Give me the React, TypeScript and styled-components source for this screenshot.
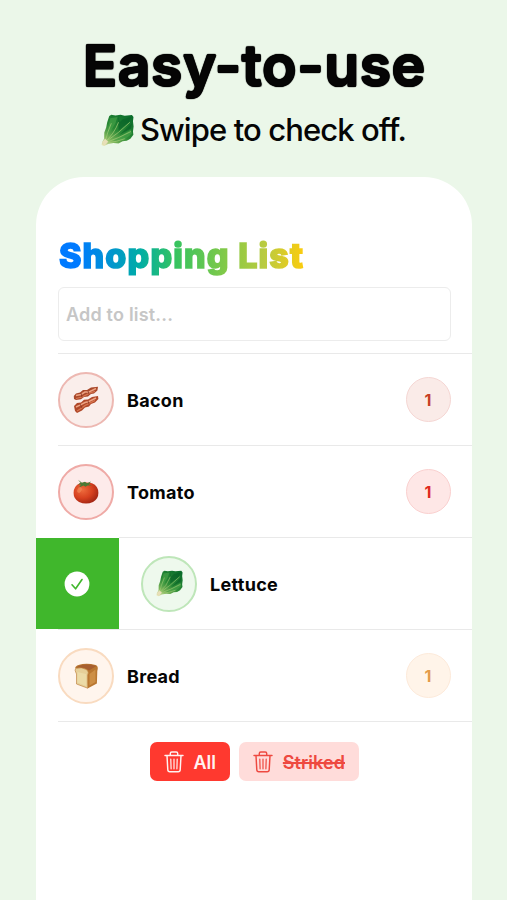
import React from 'react';
import styled, { createGlobalStyle } from 'styled-components';

const Global = createGlobalStyle`
  * { box-sizing: border-box; }
  body { margin: 0; background: #ebf7e9; font-family: Inter, "Liberation Sans", sans-serif; color: #050505; }
`;

const Page = styled.main`
  width: 507px;
  height: 900px;
  overflow: hidden;
  display: flex;
  flex-direction: column;
  align-items: center;
  background: #ebf7e9;
`;

const Header = styled.header`
  height: 177px;
  flex: none;
  padding-top: 30px;
  display: flex;
  flex-direction: column;
  align-items: center;
`;

/* A ring of solid shadows thickens the strokes and rounds their corners. */
const Title = styled.h1`
  margin: 0;
  font-size: 57px;
  line-height: 72px;
  font-weight: 600;
  letter-spacing: 0.55px;
  text-indent: 1.5px;
  white-space: nowrap;
  color: #050505;
  text-shadow: 1px 0 .7px, -1px 0 .7px, 0 1px .7px, 0 -1px .7px,
    .7px .7px .7px, -.7px .7px .7px, .7px -.7px .7px, -.7px -.7px .7px;
`;

const Subtitle = styled.p`
  margin: 8px 0 0;
  display: flex;
  align-items: center;
  gap: 6px;
  height: 40px;
  font-size: 31px;
  line-height: 40px;
  font-weight: 500;
  letter-spacing: -0.9px;
  white-space: nowrap;
`;

const Card = styled.section`
  width: 436px;
  margin-left: 1px;
  flex: 1;
  background: #fff;
  border-radius: 48px 48px 0 0;
  overflow: hidden;
  display: flex;
  flex-direction: column;
`;

const ListTitle = styled.h2`
  margin: 57px 0 0 22px;
  padding: 0 2px 0 1px;
  align-self: flex-start;
  height: 53px;
  font-size: 34px;
  line-height: 43px;
  font-weight: 800;
  letter-spacing: 1.15px;
  white-space: nowrap;
  color: transparent;
  -webkit-text-stroke: 1.6px transparent;
  background: linear-gradient(90deg, #007aff 8%, #00ada5 33%, #34c360 47%, #8cca45 70%, #bccb40 84%, #ffcc0a 100%);
  -webkit-background-clip: text;
  background-clip: text;
`;

const AddField = styled.input`
  margin: 0 21px 12px 22px;
  width: 393px;
  height: 54px;
  padding: 0 7px;
  border: 1px solid #ececec;
  border-radius: 6px;
  outline: none;
  background: #fff;
  font: 600 18px Inter, sans-serif;
  letter-spacing: 0.2px;
  &::placeholder { color: #c6c6c6; opacity: 1; }
`;

const List = styled.ul`
  list-style: none;
  margin: 0;
  padding: 0;
`;

const Row = styled.li`
  height: 92px;
  display: flex;
`;

const SwipeAction = styled.div`
  width: 83px;
  flex: none;
  margin-top: 1px;
  padding: 1px 2px 0 0;
  display: grid;
  place-items: center;
  background: #40b72c;
`;

const RowBody = styled.div<{ $swiped?: boolean; $last?: boolean }>`
  flex: 1;
  margin-left: ${p => (p.$swiped ? 0 : 22)}px;
  padding: 1px 21px 0 ${p => (p.$swiped ? 22 : 0)}px;
  display: flex;
  align-items: center;
  box-shadow: inset 0 1px #e9e9e9${p => (p.$last ? ', 0 1px #e9e9e9' : '')};
`;

const Avatar = styled.div<{ $bg: string; $ring: string }>`
  width: 56px;
  height: 56px;
  flex: none;
  border-radius: 50%;
  border: 2px solid ${p => p.$ring};
  background: ${p => p.$bg};
  display: grid;
  place-items: center;
`;

const Name = styled.span`
  flex: 1;
  margin-left: 13px;
  padding-top: 1px;
  font-size: 18px;
  font-weight: 700;
  letter-spacing: 0.3px;
`;

const Count = styled.span<{ $bg: string; $ring: string; $ink: string }>`
  width: 45px;
  height: 45px;
  padding-right: 1px;
  border-radius: 50%;
  border: 1.5px solid ${p => p.$ring};
  background: ${p => p.$bg};
  color: ${p => p.$ink};
  font-size: 16px;
  font-weight: 700;
  display: grid;
  place-items: center;
`;

const Actions = styled.div`
  margin: 21px 0 0 1px;
  display: flex;
  justify-content: center;
  gap: 9px;
`;

const ClearButton = styled.button<{ $soft?: boolean }>`
  width: ${p => (p.$soft ? 120 : 80)}px;
  height: 39px;
  padding: 1px 14px 0 14px;
  border: 0;
  border-radius: 7px;
  display: flex;
  align-items: center;
  justify-content: space-between;
  background: ${p => (p.$soft ? '#ffdcda' : '#ff392f')};
  color: ${p => (p.$soft ? '#ee4940' : '#fff3f1')};
  font: 600 18px Inter, sans-serif;
  letter-spacing: ${p => (p.$soft ? 0.05 : 0)}px;
  text-decoration: ${p => (p.$soft ? 'line-through' : 'none')};
  text-decoration-thickness: 2px;
`;

const Lettuce = ({ size }: { size: number }) => (
  <svg width={size} height={size} viewBox="0 0 32 32">
    <defs>
      <linearGradient id="leaf" x1="0.8" y1="0" x2="0.1" y2="1">
        <stop offset="0" stopColor="#0b6e2b" />
        <stop offset="0.5" stopColor="#2b8a36" />
        <stop offset="0.8" stopColor="#7db55a" />
        <stop offset="1" stopColor="#e6e2b4" />
      </linearGradient>
    </defs>
    <path d="M8 2 10 .8 14 1.4 19 .8 23 1.6 30 1 31.5 3 31 7 31.6 12 31 17 31.4 20 28.5 24 25 26 21 26.5 17 28.5 12 28 7 29 3 31 .6 30 1 27.5 3 24 3.2 18 5 13 6 8Z" fill="url(#leaf)" />
    <path d="M9 4 16 3 14 9 8 19 5 22ZM29 15 30 19 23 25 12 26Z" fill="#4aa54a" opacity=".6" />
    <path d="M17 2 18 8 21 5 29 3 27 8 17 16ZM30 9 29 14 18 20Z" fill="#075f27" opacity=".6" />
    <path d="M3 28Q13 19 17 8M3 28Q18 18 28 8M4 28Q18 23 29 17M4 27Q6 18 10 9M6 28Q15 27 23 24" fill="none" stroke="#a6cc78" strokeWidth=".8" opacity=".85" />
    <path d="M1 27.5 4 24 7 27 3.5 30.5Z" fill="#e8dfb8" />
  </svg>
);

const Bacon = () => (
  <svg width="26" height="28" viewBox="0 0 26 28">
    <path d="M.8 10 3 7.5 7 6.5 10 4 14 4 18 1.6 25 .8 24.4 4.5 21 7.5 18 8 15 10.5 11 11 8 13.2 3 14 1 13Z" fill="#a9482a" />
    <path d="M1 20 4 17 8 16.5 11 13.8 15 13.5 19 11 25 10 25.4 13 22 16.5 18 18 16 20.6 12 21.5 9 24.6 4 27 2 25Z" fill="#b04829" />
    <path d="M3 9.5 8 8.5 12 6 16 6 23 2.5M3 21 8 18.6 12 16.5 16 15.5 23 12" fill="none" stroke="#eda383" strokeWidth="1.5" />
    <path d="M3 12.5 9 11 13 9 18 6.5 22 5.5M4 25 8 22.5 12 19.5 17 17 22 14.5" fill="none" stroke="#da7852" strokeWidth="1.2" />
    <path d="m8 7 1 4M15 5l1 3M7 18l2 4M15 15l1 3" stroke="#7e2c1c" strokeWidth="1" opacity=".7" />
  </svg>
);

const Tomato = () => (
  <svg width="26" height="26" viewBox="0 0 26 26">
    <defs>
      <radialGradient id="skin" cx=".36" cy=".35" r=".72">
        <stop offset="0" stopColor="#ee6c3d" />
        <stop offset=".55" stopColor="#d7411f" />
        <stop offset="1" stopColor="#9f2413" />
      </radialGradient>
    </defs>
    <path d="M.6 14Q.6 7 7 4.3 13 2.6 19 4.3 25.4 7 25.4 14 25.4 20 20 23 13 26 6 23 .6 20 .6 14Z" fill="url(#skin)" />
    <path d="m5 .8 4 3 3-1 2 1.4 4-1.8-2 3 3 1-4.5 0-2 1.4-2-1.4-4.5 2 2-3-3 0 2.5-1.6Z" fill="#4b7a35" />
    <ellipse cx="6.5" cy="11" rx="2" ry="3" fill="#f8a06b" opacity=".45" transform="rotate(30 6.5 11)" />
  </svg>
);

const Bread = () => (
  <svg width="25" height="26" viewBox="0 0 24 26">
    <path d="M.6 5Q1 2 8 1Q14 0 21 2Q24.4 3 22.8 8L22.4 20.5 13 25.4 11.5 8Z" fill="#b97731" />
    <path d="M1 5.5Q7 3.5 12 6.5Q15 9 13.2 12V25.2L2 21V11Q-.2 7 1 5.5Z" fill="#e6cf98" stroke="#ba7934" strokeWidth=".6" />
    <path d="M1.5 4.5Q9 -.5 22 3L14.5 7.5Q9 3.5 1.5 4.5Z" fill="#a75f30" />
    <path d="m15 11 6-4.5V19l-6 3.5Z" fill="#d69a50" opacity=".7" />
    <path d="M3 9v10.5l8.5 3.5V11Z" fill="#eedfae" opacity=".7" />
  </svg>
);

const CheckMark = () => (
  <svg width="26" height="26" viewBox="0 0 26 26">
    <circle cx="13" cy="13" r="12.4" fill="#fff" />
    <path d="m8 13.8 3.6 4L18 8.5" fill="none" stroke="#40b72c" strokeWidth="1.6" strokeLinecap="round" strokeLinejoin="round" />
  </svg>
);

const Trash = () => (
  <svg width="20" height="22" viewBox="0 0 20 22" fill="none" stroke="currentColor" strokeWidth="1.45" strokeLinecap="round" strokeLinejoin="round">
    <path d="M1 4.5h18M6.3 4.2V2.5Q6.3 1 7.8 1h4.4q1.5 0 1.5 1.5v1.7M3 4.8l.8 14q.1 2 2 2h8.4q1.9 0 2-2l.8-14" />
    <path d="m6.8 8 .3 9.8M10 8v9.8M13.2 8l-.3 9.8" strokeWidth="1.2" />
  </svg>
);

const items = [
  { name: 'Bacon', icon: <Bacon />, bg: '#faeeeb', ring: '#edb8b2', countBg: '#faebe8', countRing: '#f5d6d3', ink: '#c73f25' },
  { name: 'Tomato', icon: <Tomato />, bg: '#fdebea', ring: '#efaaa6', countBg: '#fee7e6', countRing: '#fad0cf', ink: '#df2a20' },
  { name: 'Lettuce', icon: <Lettuce size={27} />, bg: '#eef9ed', ring: '#bee6b9', swiped: true },
  { name: 'Bread', icon: <Bread />, bg: '#fff5ed', ring: '#f9dbc0', countBg: '#fff4e9', countRing: '#fdeada', ink: '#e49b49' },
];

export default function App() {
  return (
    <Page>
      <Global />
      <Header>
        <Title>Easy-to-use</Title>
        <Subtitle><Lettuce size={33} /><span>Swipe to check off.</span></Subtitle>
      </Header>
      <Card>
        <ListTitle>Shopping List</ListTitle>
        <AddField placeholder="Add to list..." />
        <List>
          {items.map((item, i) => (
            <Row key={item.name}>
              {item.swiped && <SwipeAction><CheckMark /></SwipeAction>}
              <RowBody $swiped={item.swiped} $last={i === items.length - 1}>
                <Avatar $bg={item.bg} $ring={item.ring}>{item.icon}</Avatar>
                <Name>{item.name}</Name>
                {item.ink && <Count $bg={item.countBg} $ring={item.countRing} $ink={item.ink}>1</Count>}
              </RowBody>
            </Row>
          ))}
        </List>
        <Actions>
          <ClearButton><Trash />All</ClearButton>
          <ClearButton $soft><Trash />Striked</ClearButton>
        </Actions>
      </Card>
    </Page>
  );
}
